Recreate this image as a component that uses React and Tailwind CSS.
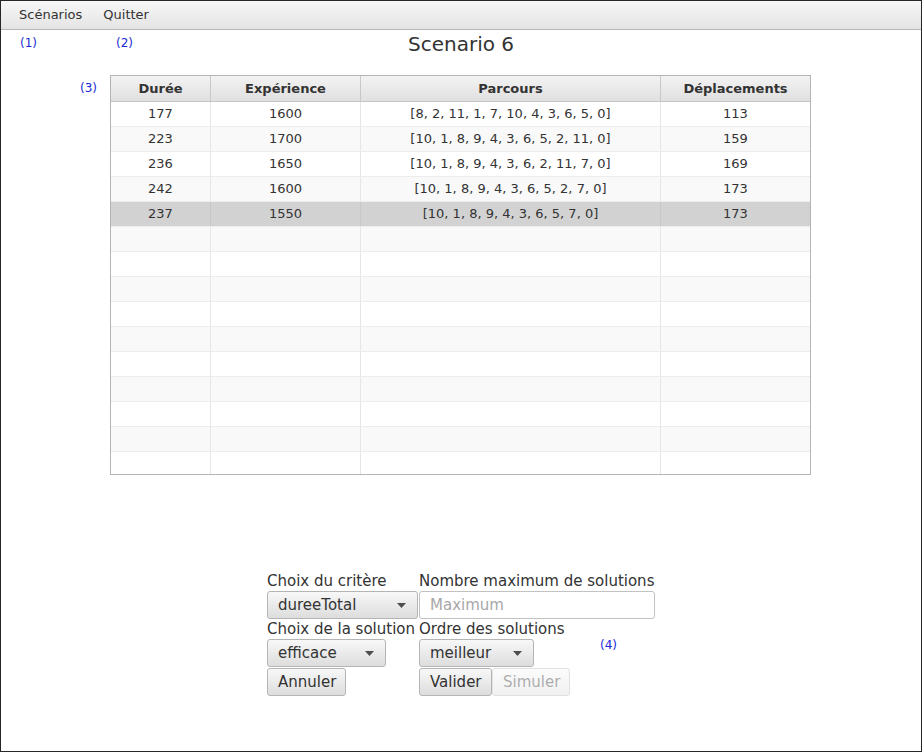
import React from "react";

const rows = [
  ["177", "1600", "[8, 2, 11, 1, 7, 10, 4, 3, 6, 5, 0]", "113"],
  ["223", "1700", "[10, 1, 8, 9, 4, 3, 6, 5, 2, 11, 0]", "159"],
  ["236", "1650", "[10, 1, 8, 9, 4, 3, 6, 2, 11, 7, 0]", "169"],
  ["242", "1600", "[10, 1, 8, 9, 4, 3, 6, 5, 2, 7, 0]", "173"],
  ["237", "1550", "[10, 1, 8, 9, 4, 3, 6, 5, 7, 0]", "173"],
];

const cols = ["w-[100px]", "w-[150px]", "w-[300px]", "w-[149px]"];
const headers = ["Durée", "Expérience", "Parcours", "Déplacements"];

function Arrow() {
  return (
    <svg width="9" height="5" viewBox="0 0 9 5" className="shrink-0">
      <path d="M0 0 L9 0 L4.5 5 Z" fill="#4d4d4d" />
    </svg>
  );
}

function Combo({ label, width }) {
  return (
    <div
      className={`${width} h-[28px] flex items-center justify-between pl-[10px] pr-[11px] rounded-[3px] border border-[#b5b5b5] bg-gradient-to-b from-[#f8f8f8] to-[#dddddd] text-[15px] text-[#333]`}
    >
      <span>{label}</span>
      <Arrow />
    </div>
  );
}

function Btn({ label, width, disabled }) {
  return (
    <div
      className={`${width} h-[28px] flex items-center pl-[10px] rounded-[3px] border border-[#b5b5b5] bg-gradient-to-b from-[#f8f8f8] to-[#dddddd] text-[15px] text-[#333] ${disabled ? "opacity-40" : ""}`}
    >
      {label}
    </div>
  );
}

function Note({ children, className }) {
  return (
    <span className={`absolute text-[12px] leading-[14px] text-[#1a2bd6] ${className}`}>{children}</span>
  );
}

export default function App() {
  const bodyRows = [];
  for (let i = 0; i < 15; i++) {
    const r = rows[i];
    const selected = i === 4;
    const bg = selected ? "bg-[#d2d2d2]" : i % 2 === 1 ? "bg-[#f9f9f9]" : "bg-white";
    bodyRows.push(
      <div key={i} className={`flex h-[25px] shrink-0 border-b border-[#ececec] ${bg}`}>
        {cols.map((c, j) => (
          <div
            key={j}
            className={`${c} shrink-0 h-full flex items-center justify-center ${j < 3 ? "border-r border-[#e6e6e6]" : ""} ${selected ? "border-r-[#c8c8c8]" : ""}`}
          >
            {r ? r[j] : ""}
          </div>
        ))}
      </div>
    );
  }

  return (
    <div
      className="relative w-[922px] h-[752px] border border-[#262626] bg-white flex flex-col text-[#333]"
      style={{ fontFamily: '"DejaVu Sans", Verdana, sans-serif' }}
    >
      {/* menu bar */}
      <div className="h-[29px] shrink-0 flex items-center border-b border-[#b8b8b8] bg-gradient-to-b from-[#f7f7f7] to-[#e4e4e4] text-[13px] text-[#333] pl-[18px] gap-[21px]">
        <span>Scénarios</span>
        <span>Quitter</span>
      </div>

      <Note className="left-[19px] top-[35px]">(1)</Note>
      <Note className="left-[115px] top-[35px]">(2)</Note>
      <Note className="left-[79px] top-[80px]">(3)</Note>
      <Note className="left-[599px] top-[637px]">(4)</Note>

      <div className="flex justify-center pt-[1px] h-[45px] text-[20px] leading-[26px] text-[#333]">
        Scenario 6
      </div>

      {/* table */}
      <div className="ml-[109px] w-[701px] h-[400px] border border-[#b4b4b4] flex flex-col overflow-hidden text-[13px] text-[#333]">
        <div className="flex h-[26px] shrink-0 border-b border-[#c4c4c4] bg-gradient-to-b from-[#f3f3f3] to-[#e0e0e0] font-bold">
          {cols.map((c, j) => (
            <div
              key={j}
              className={`${c} shrink-0 h-full flex items-center justify-center ${j < 3 ? "border-r border-[#c8c8c8]" : ""}`}
            >
              {headers[j]}
            </div>
          ))}
        </div>
        <div className="flex flex-col overflow-hidden flex-1">{bodyRows}</div>
      </div>

      {/* form */}
      <div className="mt-[96px] flex justify-center">
        <div className="w-[388px] flex flex-col">
          <div className="flex">
            <div className="w-[152px] h-[20px] text-[15px] leading-[21px]">Choix du critère</div>
            <div className="h-[20px] text-[15px] leading-[21px]">Nombre maximum de solutions</div>
          </div>
          <div className="flex">
            <div className="w-[152px]">
              <Combo label="dureeTotal" width="w-[151px]" />
            </div>
            <div className="w-[236px] h-[28px] flex items-center pl-[10px] rounded-[3px] border border-[#c2c2c2] bg-white text-[15px] text-[#a8a8a8]">
              Maximum
            </div>
          </div>
          <div className="flex">
            <div className="w-[152px] h-[20px] text-[15px] leading-[21px] whitespace-nowrap">Choix de la solution</div>
            <div className="h-[20px] text-[15px] leading-[21px]">Ordre des solutions</div>
          </div>
          <div className="flex">
            <div className="w-[152px]">
              <Combo label="efficace" width="w-[119px]" />
            </div>
            <Combo label="meilleur" width="w-[115px]" />
          </div>
          <div className="flex mt-[1px]">
            <div className="w-[152px]">
              <Btn label="Annuler" width="w-[79px]" />
            </div>
            <Btn label="Valider" width="w-[73px]" />
            <Btn label="Simuler" width="w-[78px]" disabled />
          </div>
        </div>
      </div>
    </div>
  );
}
